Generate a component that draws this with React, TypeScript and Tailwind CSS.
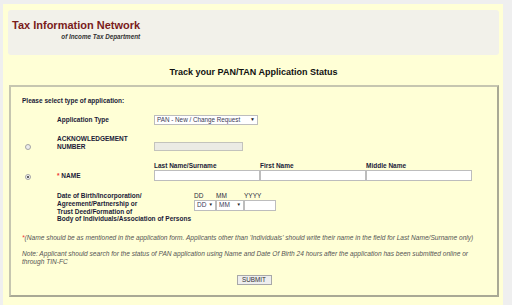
export default function App() {
  const label = "text-[6.5px] leading-[8px] font-bold text-[#1b1b38]";
  const field = "h-[10px] border border-[#bdbdbd] bg-white";

  return (
    <div className="w-[512px] h-[305px] bg-[#efefef] pt-[4px] pl-[3px] pr-[9px] overflow-hidden font-['Liberation_Sans',Arial,sans-serif]">
      <div className="h-full bg-[#ffffd6] pt-[6px] pl-[5px] pr-[4px]">
        {/* Header */}
        <div className="h-[45px] rounded-[3px] bg-[#f2f1ea] pl-[4px] pt-[2px]">
          <div className="inline-flex flex-col items-end">
            <span className="text-[11px] leading-[13px] font-bold text-[#7a1c1c]">
              Tax Information Network
            </span>
            <span className="text-[6.3px] leading-[10px] italic font-bold text-[#333]">
              of Income Tax Department
            </span>
          </div>
        </div>

        <h1 className="mt-[11px] text-center text-[9px] leading-[12px] font-bold text-[#111]">
          Track your PAN/TAN Application Status
        </h1>

        {/* Form box */}
        <div className="mt-[7px] ml-[1px] border-2 border-[#c6c6b0] border-r-[#a9a995] border-b-[#a9a995] px-[11px] pt-[10px] pb-[10px]">
          <p className={label}>Please select type of application:</p>

          {/* Application type */}
          <div className="mt-[10px] flex items-center">
            <div className="w-[35px]" />
            <div className={`w-[97px] ${label}`}>Application Type</div>
            <div className={`${field} w-[104px] flex items-center justify-between px-[2px] text-[6.3px] text-[#3a3a55]`}>
              <span>PAN - New / Change Request</span>
              <span className="text-[5px] text-[#222]">▼</span>
            </div>
          </div>

          {/* Acknowledgement */}
          <div className="mt-[10px] flex items-end">
            <div className="w-[35px] pl-[3px] pb-[1px]">
              <span className="block w-[6px] h-[6px] rounded-full border border-[#a5a5a5] bg-[#ececec]" />
            </div>
            <div className={`w-[97px] ${label}`}>
              ACKNOWLEDGEMENT
              <br />
              NUMBER
            </div>
            <div className="h-[9px] w-[89px] border border-[#c3c3bc] bg-[#ebebe4]" />
          </div>

          {/* Name */}
          <div className="mt-[11px] flex items-end">
            <div className="w-[35px] pl-[3px] pb-[1px]">
              <span className="flex items-center justify-center w-[6px] h-[6px] rounded-full border border-[#a5a5a5] bg-[#f4f4f4]">
                <span className="w-[2px] h-[2px] rounded-full bg-[#333]" />
              </span>
            </div>
            <div className={`w-[97px] ${label} pb-[1px]`}>
              <span className="text-[#e33]">*</span> NAME
            </div>
            <div className="grid grid-cols-3 w-[318px]">
              {["Last Name/Surname", "First Name", "Middle Name"].map((n) => (
                <div key={n} className="flex flex-col">
                  <span className={label}>{n}</span>
                  <div className={`${field} h-[11px]`} />
                </div>
              ))}
            </div>
          </div>

          {/* Date of birth */}
          <div className="mt-[11px] flex items-start">
            <div className="w-[35px]" />
            <div className="w-[137px] text-[6.5px] leading-[7.8px] font-bold text-[#1b1b38]">
              Date of Birth/Incorporation/
              <br />
              Agreement/Partnership or
              <br />
              Trust Deed/Formation of
              <br />
              Body of Individuals/Association of Persons
            </div>
            <div className="flex flex-col text-[6.5px] leading-[7.8px] text-[#2a2a40]">
              <div className="flex">
                <span className="w-[22px]">DD</span>
                <span className="w-[28px]">MM</span>
                <span>YYYY</span>
              </div>
              <div className="flex">
                <div className={`${field} h-[11px] w-[22px] flex items-center justify-between px-[2px] text-[#3a3a55]`}>
                  <span>DD</span>
                  <span className="text-[4.5px] text-[#222]">▼</span>
                </div>
                <div className={`${field} h-[11px] w-[28px] flex items-center justify-between px-[2px] text-[#3a3a55]`}>
                  <span>MM</span>
                  <span className="text-[4.5px] text-[#222]">▼</span>
                </div>
                <div className={`${field} h-[11px] w-[32px]`} />
              </div>
            </div>
          </div>

          {/* Notes */}
          <p className="mt-[11px] text-[6.6px] leading-[8px] italic text-[#555] whitespace-nowrap">
            <span className="text-[#e33]">*</span>(Name should be as mentioned in the application form. Applicants other
            than 'Individuals' should write their name in the field for Last Name/Surname only)
          </p>
          <p className="mt-[8px] text-[6.6px] leading-[8px] italic text-[#555] whitespace-nowrap">
            Note: Applicant should search for the status of PAN application using Name and Date Of Birth 24 hours after
            the application has been submitted online or
            <br />
            through TIN-FC
          </p>

          <div className="mt-[9px] flex justify-center">
            <button className="h-[10px] w-[35px] border border-[#a8a8a8] bg-[#eeeeee] text-[6.3px] leading-[8px] text-[#333]">
              SUBMIT
            </button>
          </div>
        </div>
      </div>
    </div>
  );
}
